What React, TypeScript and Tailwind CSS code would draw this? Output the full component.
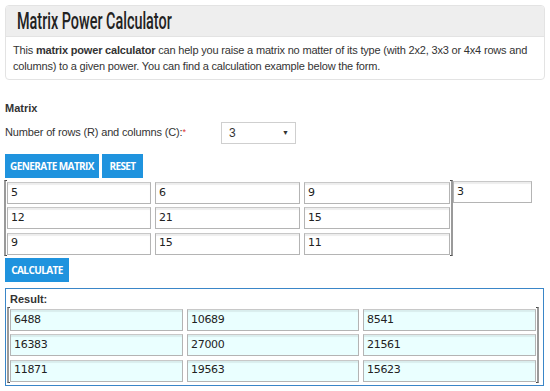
import React from 'react';

const matrix = [
  ['5', '6', '9'],
  ['12', '21', '15'],
  ['9', '15', '11'],
];

const result = [
  ['6488', '10689', '8541'],
  ['16383', '27000', '21561'],
  ['11871', '19563', '15623'],
];

function Cell({ value, tint }: { value: string; tint?: boolean }) {
  return (
    <div
      className={`h-[22px] border border-[#b4b4b4] border-t-[#c8c8c8] shadow-[inset_0_2px_1px_rgba(0,0,0,0.07)] pl-[3px] flex items-center text-[11px] text-[#222] font-['DejaVu_Sans',sans-serif] tracking-[-0.3px] ${
        tint ? 'bg-[#eaffff]' : 'bg-white'
      }`}
    >
      {value}
    </div>
  );
}

function Bracket({ side }: { side: 'left' | 'right' }) {
  return (
    <div
      className={`w-[3px] self-stretch border-y border-[#444] ${
        side === 'left' ? '-ml-[1px] border-l-2 border-l-[#9a9a9a]' : 'border-r-2 border-r-[#9a9a9a]'
      }`}
    />
  );
}

function BlueButton({ children, w }: { children: React.ReactNode; w: string }) {
  return (
    <button
      className={`${w} h-[24px] bg-[#1f93de] text-white text-[10px] font-bold font-['Open_Sans',sans-serif] tracking-[-0.6px] flex items-center justify-center whitespace-nowrap`}
    >
      {children}
    </button>
  );
}

export default function App() {
  return (
    <div className="w-[550px] h-[391px] overflow-hidden bg-white text-[#333] font-['Liberation_Sans',Arial,sans-serif]">
      {/* Intro card */}
      <div className="mx-[5px] mt-[5px] border border-[#e3e3e3] rounded-[4px] overflow-hidden">
        <div className="h-[31px] bg-[#eeeeee] border-b border-[#e3e3e3] pl-[11px] flex items-center">
          <h1 className="text-[24px] leading-none text-[#222] font-['Roboto',sans-serif] font-medium scale-x-[0.6] origin-left whitespace-nowrap">
            Matrix Power Calculator
          </h1>
        </div>
        <p className="px-[7px] pt-[5px] pb-[5px] text-[11px] leading-[16px] tracking-[-0.18px] whitespace-nowrap">
          This <b>matrix power calculator</b> can help you raise a matrix no matter of its type (with 2x2, 3x3 or 4x4 rows and
          <br />
          columns) to a given power. You can find a calculation example below the form.
        </p>
      </div>

      <div className="px-[5px]">
        <div className="mt-[21px] text-[11px] font-bold leading-[14px]">Matrix</div>

        <div className="mt-[7px] flex items-center h-[22px]">
          <div className="w-[216px] text-[11px] leading-[14px] tracking-[-0.15px] -mt-[3px]">
            Number of rows (R) and columns (C):<span className="text-[#d33] text-[9px] align-top">*</span>
          </div>
          <div className="w-[75px] h-[22px] border border-[#cfcfcf] flex items-center justify-between pl-[7px] pr-[6px] text-[12px]">
            <span>3</span>
            <span className="text-[7px] text-[#333]">▼</span>
          </div>
        </div>

        <div className="mt-[10px] flex gap-[3px]">
          <BlueButton w="w-[94px]">GENERATE MATRIX</BlueButton>
          <BlueButton w="w-[41px]">RESET</BlueButton>
        </div>

        <div className="mt-[2px] flex items-start">
          <div className="flex h-[76px]">
            <Bracket side="left" />
            <div className="grid grid-cols-[144px_145px_146px] gap-x-[4px] gap-y-[2px] pt-[2px]">
              {matrix.flat().map((v, i) => (
                <Cell key={i} value={v} />
              ))}
            </div>
            <Bracket side="right" />
          </div>
          <div className="mt-[1px] w-[79px]">
            <Cell value="3" />
          </div>
        </div>

        <div className="mt-[2px]">
          <BlueButton w="w-[64px]">CALCULATE</BlueButton>
        </div>

        <div className="mt-[6px] w-[539px] h-[98px] border border-[#3a86c8] pl-[2px] pt-[3px]">
          <div className="pl-[2px] text-[11px] font-bold leading-[14px]">Result:</div>
          <div className="mt-[1px] flex h-[76px]">
            <Bracket side="left" />
            <div className="grid grid-cols-[173px_172px_173px] gap-x-[4px] gap-y-[2px] pt-[2px]">
              {result.flat().map((v, i) => (
                <Cell key={i} value={v} tint />
              ))}
            </div>
            <Bracket side="right" />
          </div>
        </div>
      </div>
    </div>
  );
}
